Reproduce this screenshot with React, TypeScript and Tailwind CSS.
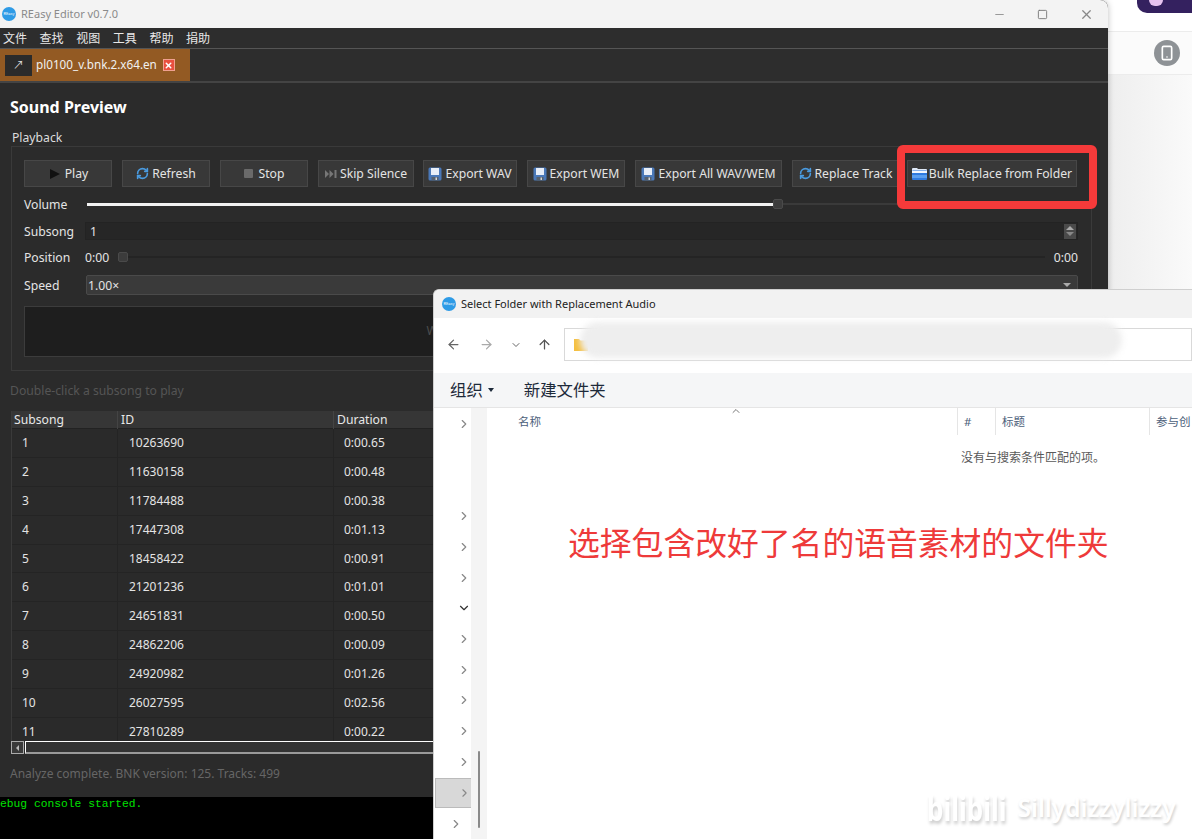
import { RefreshCw, ChevronRight, ChevronDown, ChevronUp, ArrowLeft, ArrowRight, ArrowUp, Minus, Square, X, Smartphone } from "lucide-react";

const uiFont = "font-['Noto_Sans','Noto_Sans_CJK_SC',sans-serif]";

const tracks = [
  ["1", "10263690", "0:00.65"],
  ["2", "11630158", "0:00.48"],
  ["3", "11784488", "0:00.38"],
  ["4", "17447308", "0:01.13"],
  ["5", "18458422", "0:00.91"],
  ["6", "21201236", "0:01.01"],
  ["7", "24651831", "0:00.50"],
  ["8", "24862206", "0:00.09"],
  ["9", "24920982", "0:01.26"],
  ["10", "26027595", "0:02.56"],
  ["11", "27810289", "0:00.22"],
];

function AppLogo() {
  return (
    <div className="w-[14px] h-[14px] shrink-0 flex items-center justify-center rounded-full bg-[#2e9be6] text-[4px] leading-none text-white">
      REasy
    </div>
  );
}

function Floppy() {
  return (
    <svg width="14" height="14" viewBox="0 0 14 14" className="shrink-0">
      <rect x="0.5" y="0.5" width="13" height="13" rx="1.5" fill="#4a78b8" />
      <rect x="3" y="1" width="8" height="7" fill="#e8eef8" />
      <rect x="3.5" y="10" width="7" height="3.5" fill="#55606e" />
      <rect x="7.5" y="10.5" width="1.5" height="2.5" fill="#d5d5d5" />
    </svg>
  );
}

function BlueFolder() {
  return (
    <svg width="15" height="13" viewBox="0 0 15 13" className="shrink-0">
      <path d="M0 2a1 1 0 0 1 1-1h4l1 1h8a1 1 0 0 1 1 1v1H0z" fill="#dfe9f7" />
      <rect x="0" y="3.5" width="15" height="9.5" rx="1" fill="#2f7be0" />
      <rect x="0" y="4" width="15" height="2" fill="#f3f7fd" />
      <rect x="0" y="8" width="15" height="3" fill="#5a9ff0" />
    </svg>
  );
}

function Skip() {
  return (
    <svg width="12" height="8" viewBox="0 0 12 8" className="shrink-0">
      <path d="M0 0l4 4-4 4zM4.500 0l4 4-4 4z" fill="#777" />
      <rect x="9.500" y="0" width="2" height="8" fill="#777" />
    </svg>
  );
}

function ToolButton({ w, icon, label, gap = "gap-[3px]" }: { w: string; icon: React.ReactNode; label: string; gap?: string }) {
  return (
    <div className={`${w} ${gap} h-[27px] shrink-0 flex items-center justify-center border border-[#474747] bg-[#383838] text-[12.200px] text-[#e4e4e4]`}>
      {icon}
      <span className="pt-[2px]">{label}</span>
    </div>
  );
}

function Toolbar() {
  return (
    <div className="flex items-center">
      <ToolButton w="w-[88px] mr-[10px]" gap="gap-[5px]" label="Play" icon={<span className="ml-[2px] w-0 h-0 border-y-[5.500px] border-y-transparent border-l-[10px] border-l-[#111]" />} />
      <ToolButton w="w-[88px] mr-[10px]" label="Refresh" icon={<RefreshCw size={13} strokeWidth={3} className="text-[#4a9be0]" />} />
      <ToolButton w="w-[88px] mr-[10px]" gap="gap-[6px]" label="Stop" icon={<span className="w-[9px] h-[9px] rounded-[1px] bg-[#6a6a6a]" />} />
      <ToolButton w="w-[96px] mr-[9px]" label="Skip Silence" icon={<Skip />} />
      <ToolButton w="w-[94px] mr-[10px]" label="Export WAV" icon={<Floppy />} />
      <ToolButton w="w-[98px] mr-[10px]" label="Export WEM" icon={<Floppy />} />
      <ToolButton w="w-[147px] mr-[10px]" label="Export All WAV/WEM" icon={<Floppy />} />
      <ToolButton w="w-[107px] mr-[8px]" label="Replace Track" icon={<RefreshCw size={13} strokeWidth={3} className="text-[#4a9be0]" />} />
      <ToolButton w="w-[170px]" gap="gap-[2px]" label="Bulk Replace from Folder" icon={<BlueFolder />} />
    </div>
  );
}

function Playback() {
  return (
    <div className="w-[1081px] h-[225px] border border-[#3a3a3a] pl-[12px] pr-[13px] pt-[13px] shrink-0">
      <Toolbar />
      {/* volume */}
      <div className="mt-[7px] h-[20px] flex items-center text-[12.200px] text-[#e4e4e4]">
        <span className="w-[63px] pt-[2px]">Volume</span>
        <div className="w-[686px] h-[3px] bg-[#f2f2f2]" />
        <div className="w-[10px] h-[10px] rounded-[2px] border border-[#4a4a4a] bg-[#3c3c3c]" />
        <div className="flex-1 h-[2px] bg-[#3a3a3a]" />
      </div>
      {/* subsong */}
      <div className="mt-[8px] h-[18px] flex items-center text-[12.200px] text-[#e4e4e4]">
        <span className="w-[61px] pt-[2px]">Subsong</span>
        <div className="flex-1 h-[18px] pl-[4px] flex items-center justify-between border border-[#232323] bg-[#262626]">
          <span className="pt-[2px]">1</span>
          <div className="w-[12px] h-[15px] mr-[1px] flex flex-col items-center justify-center gap-[2px] bg-[#4a4a4a]">
            <span className="w-0 h-0 border-x-[4px] border-x-transparent border-b-[4px] border-b-[#aaa]" />
            <span className="w-0 h-0 border-x-[4px] border-x-transparent border-t-[4px] border-t-[#888]" />
          </div>
        </div>
      </div>
      {/* position */}
      <div className="mt-[7px] h-[20px] flex items-center text-[12.200px] text-[#e4e4e4]">
        <span className="w-[61px] pt-[2px]">Position</span>
        <span className="w-[33px] pt-[2px]">0:00</span>
        <div className="w-[10px] h-[10px] rounded-[2px] border border-[#4a4a4a] bg-[#3c3c3c]" />
        <div className="w-[917px] h-[2px] bg-[#242424]" />
        <span className="ml-auto pt-[2px]">0:00</span>
      </div>
      {/* speed */}
      <div className="mt-[8px] h-[20px] flex items-center text-[12.200px] text-[#e4e4e4]">
        <span className="w-[62px] pt-[2px]">Speed</span>
        <div className="flex-1 h-[20px] pl-[1px] pr-[6px] flex items-center justify-between rounded-[2px] border border-[#4a4a4a] bg-[#3a3a3a]">
          <span className="pt-[2px]">1.00×</span>
          <span className="w-0 h-0 border-x-[4px] border-x-transparent border-t-[4px] border-t-[#aaa]" />
        </div>
      </div>
      {/* waveform */}
      <div className="mt-[11px] h-[51px] flex items-center justify-center border border-[#3c3c3c] bg-[#1e1e1e] text-[12.200px] text-[#4c4c4c]">
        Waveform will appear here during playback
      </div>
    </div>
  );
}

function TrackTable() {
  return (
    <div className="mt-[12px] w-[1080px] shrink-0">
      <div className="h-[330px] overflow-hidden border-l border-[#3a3a3a]">
        <div className="h-[18px] flex items-center bg-[#363636] border-b border-[#222] text-[12.200px] text-[#e8e8e8]">
          <span className="w-[106px] pt-[2px] pl-[2px] border-r border-[#444]">Subsong</span>
          <span className="w-[216px] pt-[2px] pl-[3px] border-r border-[#444]">ID</span>
          <span className="pt-[2px] pl-[3px]">Duration</span>
        </div>
        {tracks.map((t) => (
          <div key={t[0]} className="h-[28.900px] flex items-center border-b border-[#242424] bg-[#2a2a2a] text-[12px] text-[#e4e4e4]">
            <span className="w-[106px] h-full flex items-center pl-[10px] border-r border-[#242424]">{t[0]}</span>
            <span className="w-[216px] h-full flex items-center pl-[11px] border-r border-[#242424]">{t[1]}</span>
            <span className="pl-[10px]">{t[2]}</span>
          </div>
        ))}
      </div>
      {/* scrollbar */}
      <div className="h-[13px] flex items-stretch bg-[#2a2a2a]">
        <div className="w-[13px] flex items-center justify-center border border-[#aaa] bg-[#3a3a3a]">
          <span className="w-0 h-0 border-y-[3px] border-y-transparent border-r-[3px] border-r-[#bbb]" />
        </div>
        <div className="flex-1 ml-[1px] border-t border-l border-white border-b-2 border-b-[#9a9a9a] bg-[#333]" />
      </div>
    </div>
  );
}

function EditorWindow() {
  return (
    <div className={`absolute left-0 top-0 w-[1108px] h-[839px] flex flex-col overflow-hidden rounded-tr-[8px] shadow-[0_0_6px_rgba(0,0,0,0.25)] bg-[#2b2b2b] ${uiFont}`}>
      <div className="h-[28px] shrink-0 flex items-center pl-[2px] bg-[#f3f3f3]">
        <AppLogo />
        <span className="ml-[5px] text-[11px] text-[#8a8a8a]">REasy Editor v0.7.0</span>
        <Minus size={13} className="ml-auto mr-[31px] text-[#999]" />
        <Square size={11} className="mr-[31px] text-[#777]" />
        <X size={15} className="mr-[14px] text-[#888]" />
      </div>
      <div className="h-[21px] shrink-0 flex items-center gap-[12.600px] pl-[3px] bg-[#2d2d2d] border-b border-[#555] text-[12px] text-[#e8e8e8]">
        {["文件", "查找", "视图", "工具", "帮助", "捐助"].map((m) => (
          <span key={m} className="pt-[2px]">{m}</span>
        ))}
      </div>
      <div className="h-[34px] shrink-0 border-b-2 border-[#444] bg-[#2d2d2d]">
        <div className="w-[190px] h-full flex items-center pl-[5px] bg-[#935a23]">
          <div className="w-[27px] h-[21px] flex items-center justify-center bg-[#2b2b2b] text-[11px] text-[#ddd]">↗</div>
          <span className="ml-[4px] text-[11.700px] text-[#f0f0f0]">pl0100_v.bnk.2.x64.en</span>
          <div className="ml-[6px] w-[12px] h-[12px] flex items-center justify-center bg-[#e9503f] border border-[#f0a090]">
            <X size={9} strokeWidth={4} className="text-white" />
          </div>
        </div>
      </div>
      <div className="flex-1 flex flex-col px-[11px] min-h-0">
        <div className="-ml-[1px] mt-[12px] h-[24px] shrink-0 flex items-center text-[16px] font-bold text-white">Sound Preview</div>
        <div className="ml-[1px] mt-[11px] h-[16px] shrink-0 flex items-center text-[12.200px] text-[#dcdcdc]">Playback</div>
        <Playback />
        <div className="-ml-[1px] mt-[12px] h-[16px] shrink-0 flex items-center text-[12.200px] text-[#555]">Double-click a subsong to play</div>
        <TrackTable />
        <div className="-ml-[1px] mt-[12px] h-[16px] shrink-0 flex items-center text-[12px] text-[#666]">Analyze complete. BNK version: 125. Tracks: 499</div>
      </div>
      <div className="h-[42px] shrink-0 bg-black font-['Liberation_Mono',monospace] text-[11.300px] leading-[14px] text-[#00e000]">
        ebug console started.
      </div>
    </div>
  );
}

function BackgroundPage() {
  return (
    <div className="absolute inset-0 flex flex-col items-end bg-white">
      <div className="w-[84px] h-[31px] shrink-0 flex justify-end bg-white">
        <div className="w-[55px] h-[13px] pl-[12px] rounded-bl-[10px] bg-[#34215f]">
          <div className="w-[14px] h-[6px] rounded-b-full bg-[#e6c3ef]" />
        </div>
      </div>
      <div className="w-[84px] h-[44px] shrink-0 flex items-center justify-end pr-[12px] border-y border-[#ececec] bg-[#fbfbfb]">
        <div className="w-[26px] h-[26px] flex items-center justify-center rounded-full bg-[#8e9296]">
          <Smartphone size={16} strokeWidth={2.500} className="text-white" />
        </div>
      </div>
      <div className="w-[84px] flex-1 bg-gradient-to-r from-[#eeeeee] to-[#fafafa]" />
    </div>
  );
}

function FileDialog() {
  return (
    <div className={`absolute left-[433px] top-[289px] w-[759px] h-[550px] flex flex-col overflow-hidden rounded-tl-[6px] border-l border-t border-[#cfcfcf] bg-white ${uiFont}`}>
      <div className="h-[28px] shrink-0 flex items-center pl-[8px] bg-[#f2f2f2]">
        <AppLogo />
        <span className="ml-[5px] text-[11px] text-[#222]">Select Folder with Replacement Audio</span>
      </div>
      {/* nav row */}
      <div className="h-[55px] shrink-0 relative flex items-center pb-[2px] bg-white">
        <ArrowLeft size={15} className="ml-[12px] text-[#666]" />
        <ArrowRight size={15} className="ml-[18px] text-[#aaa]" />
        <ChevronDown size={12} className="ml-[16px] text-[#666]" />
        <ArrowUp size={15} className="ml-[15px] text-[#555]" />
        <div className="ml-[12px] flex-1 h-[33px] flex items-center pl-[9px] border border-[#d9d9d9] bg-white">
          <svg width="14" height="13" viewBox="0 0 14 13">
            <path d="M0 1h5l1.500 1.500H14V13H0z" fill="#f5bf3e" />
          </svg>
        </div>
        <div className="absolute left-[146px] top-[4px] w-[542px] h-[36px] rounded-full bg-[#eeeeee] blur-[3px]" />
      </div>
      {/* command bar */}
      <div className="h-[35px] shrink-0 flex items-center pl-[16px] border-b border-[#e5e5e5] bg-[#f5f6f7] text-[16.400px] text-[#1d2a3a]">
        <span>组织</span>
        <span className="ml-[5px] w-0 h-0 border-x-[3.500px] border-x-transparent border-t-[4px] border-t-[#1d2a3a]" />
        <span className="ml-[30px]">新建文件夹</span>
      </div>
      <div className="flex-1 flex min-h-0 relative">
        {/* folder tree */}
        <div className="relative w-[37px] shrink-0 bg-white">
          <div className="pt-[9px] flex flex-col items-start pl-[23px] text-[#888]">
            <ChevronRight size={14} className="mb-[78px]" />
            <ChevronRight size={14} className="mb-[17px]" />
            <ChevronRight size={14} className="mb-[17px]" />
            <ChevronRight size={14} className="mb-[16px]" />
            <ChevronDown size={14} className="mb-[17px] text-[#333]" />
            <ChevronRight size={14} className="mb-[17px]" />
            <ChevronRight size={14} className="mb-[16px]" />
            <ChevronRight size={14} className="mb-[17px]" />
            <ChevronRight size={14} className="mb-[17px]" />
            <ChevronRight size={14} />
          </div>
          <div className="absolute left-[1px] top-[370px] w-[36px] h-[30px] flex items-center pl-[22px] border border-[#bbb] border-r-0 bg-[#d8d8d8] text-[#888]">
            <ChevronRight size={14} />
          </div>
          <ChevronRight size={14} className="absolute left-[15px] top-[409px] text-[#888]" />
        </div>
        {/* scroll strip */}
        <div className="relative w-[16px] shrink-0 bg-[#f4f4f4]">
          <div className="absolute left-[7px] top-[343px] w-[2px] h-[77px] rounded-full bg-[#8a8a8a]" />
        </div>
        {/* file list */}
        <div className="relative flex-1 min-w-0 overflow-hidden bg-white">
          <ChevronUp size={12} className="absolute left-[243px] -top-[3px] text-[#777]" />
          <div className="h-[27px] flex items-center text-[11.500px] text-[#4c607a]">
            <span className="w-[471px] shrink-0 pl-[31px] self-stretch flex items-center border-r border-[#e5e5e5]">名称</span>
            <span className="w-[38px] shrink-0 pl-[6px] self-stretch flex items-center border-r border-[#e5e5e5]">#</span>
            <span className="w-[154px] shrink-0 pl-[6px] self-stretch flex items-center border-r border-[#e5e5e5]">标题</span>
            <span className="pl-[6px] whitespace-nowrap">参与创</span>
          </div>
          <div className="absolute left-[474px] top-[41px] text-[12px] text-[#5a5a5a] whitespace-nowrap">没有与搜索条件匹配的项。</div>
          <div className="absolute left-[81px] top-[111px] text-[31.800px] leading-[44px] text-[#ee3a3a] whitespace-nowrap font-['Noto_Sans_CJK_SC',sans-serif]">
            选择包含改好了名的语音素材的文件夹
          </div>
          <div className="absolute left-[440px] top-[382px] flex items-center gap-[11px] text-white [text-shadow:1px_2px_3px_rgba(0,0,0,0.2)]">
            <span className="text-[26px] font-bold leading-[36px] scale-y-[1.3]">bilibili</span>
            <span className="text-[24.500px] font-semibold leading-[36px]">Sillydizzylizzy</span>
          </div>
        </div>
      </div>
    </div>
  );
}

export default function App() {
  return (
    <div className="relative w-[1192px] h-[839px] overflow-hidden bg-white">
      <BackgroundPage />
      <EditorWindow />
      <FileDialog />
      {/* red highlight */}
      <div className="absolute left-[897px] top-[145px] w-[200px] h-[64px] rounded-[6px] border-[8px] border-[#f53a3a]" />
    </div>
  );
}
